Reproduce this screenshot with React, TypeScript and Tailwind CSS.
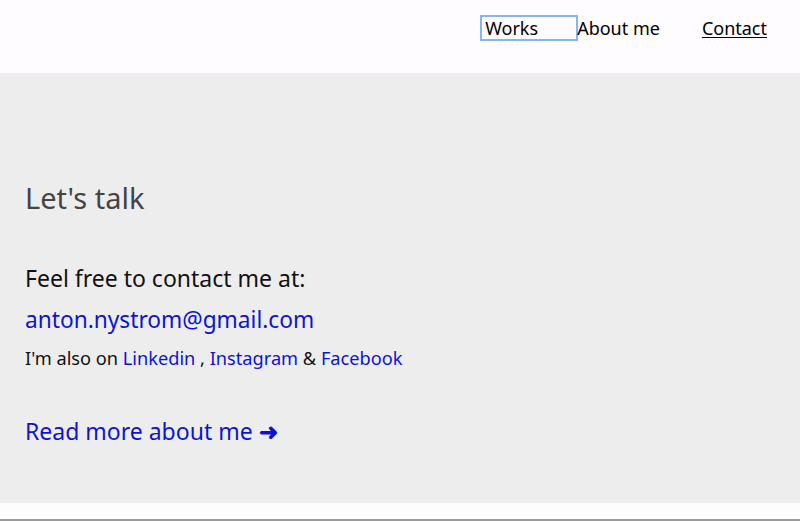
export default function App() {
  return (
    <div className="min-h-[521px] bg-[#fefcfe] font-['Noto_Sans',sans-serif]">
      <header className="flex h-[73px] items-start justify-end pr-[33px] pt-[15px]">
        <nav className="flex items-center text-[18px] text-black">
          <a href="#" className="block h-[26px] w-[98px] border-2 border-[#8ab4f0] pl-[3px] leading-[22px]">
            Works
          </a>
          <a href="#" className="-ml-[1px] leading-[26px]">
            About me
          </a>
          <a href="#" className="ml-[42px] leading-[26px] underline underline-offset-2">
            Contact
          </a>
        </nav>
      </header>
      <main className="h-[430px] bg-[#eeedee] px-[25px] pt-[107px]">
        <h2 className="text-[29px] leading-[36px] text-[#444]">Let's talk</h2>
        <p className="mt-[47px] text-[23px] leading-[30px] text-[#111]">Feel free to contact me at:</p>
        <a href="#" className="mt-[12px] block text-[22.7px] leading-[30px] text-[#0b14d4]">
          anton.nystrom@gmail.com
        </a>
        <p className="mt-[10px] text-[18.2px] leading-[26px] text-[#111]">
          I'm also on <a href="#" className="text-[#0b14d4]">Linkedin</a> ,{" "}
          <a href="#" className="text-[#0b14d4]">Instagram</a> &amp;{" "}
          <a href="#" className="text-[#0b14d4]">Facebook</a>
        </p>
        <a href="#" className="mt-[45px] block text-[23px] leading-[30px] text-[#0b14d4]">
          Read more about me <span className="font-bold">➜</span>
        </a>
      </main>
      <div className="h-[16px] bg-[#fefcfe]" />
      <div className="h-[2px] bg-[#9a9a9a]" />
    </div>
  );
}
